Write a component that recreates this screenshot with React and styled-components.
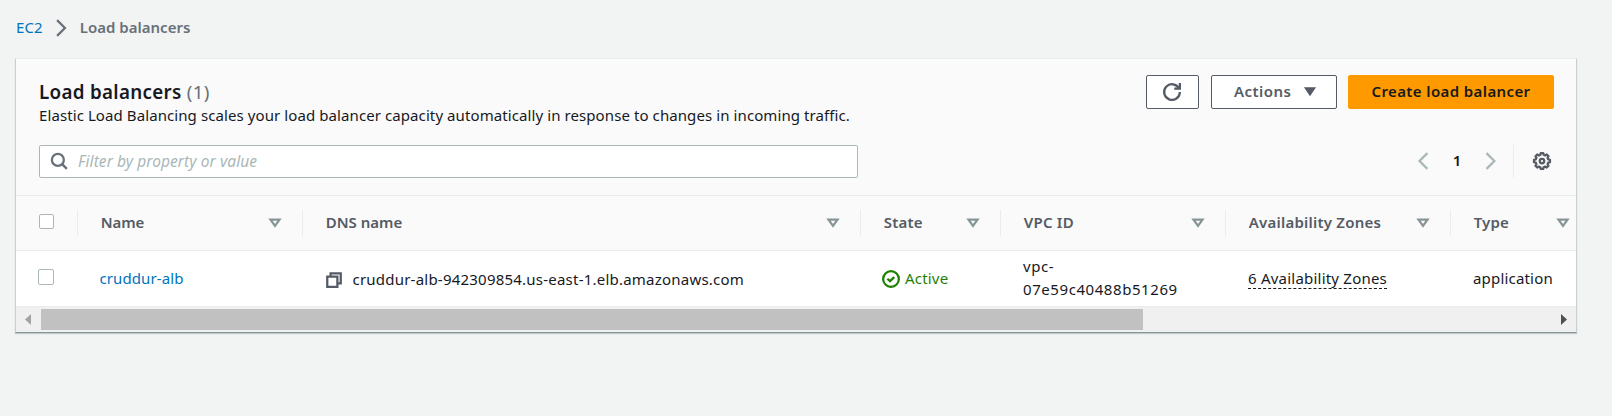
import React from 'react';
import styled, { createGlobalStyle, css } from 'styled-components';

const color = {
  page: '#f2f4f4',
  panel: '#fafafa',
  line: '#eaeded',
  edge: '#c9d0d2',
  border: '#aab7b8',
  text: '#16191f',
  heading: '#545b64',
  muted: '#687078',
  caret: '#879596',
  link: '#0073bb',
  success: '#1d8102',
  accent: '#ff9900',
};

const GlobalStyle = createGlobalStyle`
  *, *::before, *::after { box-sizing: border-box; }
  body {
    margin: 0;
    min-height: 100vh;
    background: ${color.page};
    color: ${color.text};
    font: 400 15px/22px "Noto Sans", "Open Sans", sans-serif;
  }
  button, input { font: inherit; }
`;

const Page = styled.main`
  padding: 16px 35px 0 15px;
`;

const Breadcrumbs = styled.nav`
  display: flex;
  align-items: flex-start;
  height: 42px;
  padding-left: 1px;
`;

const CrumbLink = styled.a`
  color: ${color.link};
  letter-spacing: 0.15px;
`;

const CrumbCurrent = styled.span`
  color: ${color.muted};
  font-weight: 600;
`;

const Svg = styled.svg`
  display: block;
  flex: none;
  width: 18px;
  height: 18px;
  fill: none;
  stroke: currentColor;
  stroke-width: 2;
  overflow: visible;
`;

const CrumbArrow = styled(Svg)`
  margin: 3px 10px 0 9px;
  color: ${color.muted};
`;

const Card = styled.section`
  width: 1562px;
  background: #fff;
  border: 1px solid ${color.edge};
  border-top-color: ${color.line};
  border-bottom-color: ${color.caret};
  box-shadow: 0 1px 1px rgba(0, 28, 36, 0.2);
`;

const CardHeader = styled.header`
  height: 137px;
  padding: 16px 22px 0 23px;
  background: ${color.panel};
  border-bottom: 1px solid ${color.line};
`;

const TitleRow = styled.div`
  display: flex;
  justify-content: space-between;
  height: 70px;
`;

const Title = styled.h2`
  margin: 5px 0 0;
  font-size: 18.8px;
  line-height: 24px;
  font-weight: 600;
  letter-spacing: 0.3px;
`;

const Count = styled.span`
  color: ${color.muted};
  font-weight: 400;
`;

const Description = styled.p`
  margin: 0;
  letter-spacing: 0.09px;
`;

const ButtonGroup = styled.div`
  display: flex;
  align-items: flex-start;
`;

const Button = styled.button`
  display: flex;
  align-items: center;
  justify-content: center;
  width: ${(p) => p.$width}px;
  height: 34px;
  margin-left: 12px;
  padding: 0 0 2px;
  border: 1px solid ${color.heading};
  border-radius: 2px;
  background: #fff;
  color: ${color.heading};
  font-weight: 600;
  letter-spacing: 0.45px;
  ${(p) =>
    p.$primary &&
    css`
      margin-left: 11px;
      border-color: ${color.accent};
      background: ${color.accent};
      color: ${color.text};
      letter-spacing: 0.39px;
    `}
`;

const ActionsButton = styled(Button)`
  justify-content: flex-start;
  padding-left: 22px;
`;

const ButtonCaret = styled(Svg)`
  margin: 2px 0 0 10px;
  fill: currentColor;
  stroke-width: 1.5;
`;

const RefreshIcon = styled(Svg)`
  margin: 1px 2px 0 0;
`;

const ToolRow = styled.div`
  display: flex;
  justify-content: space-between;
  height: 33px;
`;

const SearchBox = styled.label`
  display: flex;
  align-items: center;
  width: 819px;
  padding: 0 0 1px 10px;
  background: #fff;
  border: 1px solid ${color.border};
  border-radius: 2px;
  color: ${color.muted};
`;

const SearchInput = styled.input`
  flex: 1;
  height: 22px;
  margin-left: 10px;
  padding: 0 0 1px;
  border: 0;
  outline: 0;
  background: none;
  color: ${color.text};
  &::placeholder {
    color: ${color.border};
    opacity: 1;
    font-style: italic;
    font-size: 15.5px;
    letter-spacing: 0.08px;
  }
`;

const Pager = styled.div`
  display: flex;
  align-items: center;
  padding-right: 3px;
`;

const PagerArrow = styled(Svg)`
  margin-bottom: 1px;
  color: ${color.border};
`;

const PageNumber = styled.span`
  width: 49px;
  padding: 0 1px 3px 0;
  text-align: center;
  font-weight: 600;
`;

const Preferences = styled.div`
  display: flex;
  align-items: center;
  height: 33px;
  margin-left: 13px;
  padding: 0 0 1px 19px;
  border-left: 1px solid ${color.line};
  color: ${color.heading};
`;

const columns = css`
  display: grid;
  grid-template-columns: 62px 225px 558px 140px 225px 225px 140px;
  overflow: hidden;
`;

const HeadRow = styled.div`
  ${columns}
  height: 55px;
  background: ${color.panel};
  border-bottom: 1px solid ${color.line};
`;

const HeadCell = styled.div`
  display: flex;
  align-items: center;
  justify-content: space-between;
  height: 26px;
  margin-top: 14px;
  padding: 0 18px 0 22.7px;
  border-right: 1px solid ${color.line};
  color: ${color.heading};
`;

const HeadLabel = styled.span`
  padding-bottom: 2px;
  font-weight: 600;
  letter-spacing: ${(p) => p.$tracking}px;
`;

const SortCaret = styled(Svg)`
  color: ${color.caret};
`;

const BodyRow = styled.div`
  ${columns}
  height: 56px;
  padding-bottom: 1px;
  border-bottom: 1px solid ${color.line};
`;

const Cell = styled.div`
  display: flex;
  align-items: center;
  padding-left: ${(p) => p.$inset || 21}px;
  letter-spacing: ${(p) => p.$tracking || 0.1}px;
`;

const Checkbox = styled.span`
  width: ${(p) => p.$size}px;
  height: ${(p) => p.$size}px;
  border: 1px solid ${color.border};
  border-radius: 2px;
  background: #fff;
`;

const HeadCheck = styled(HeadCell)`
  padding-left: 23px;
  padding-bottom: 3px;
`;

const BodyCheck = styled(Cell)`
  padding-left: 22px;
  padding-bottom: 2px;
`;

const NameLink = styled.a`
  color: ${color.link};
`;

const DnsCell = styled(Cell)`
  gap: 9.5px;
  padding-top: 2px;
  letter-spacing: 0.22px;
`;

const DnsName = styled.span`
  padding-bottom: 1px;
`;

const CopyIcon = styled(Svg)`
  margin-top: 1px;
  color: ${color.heading};
`;

const Status = styled(Cell)`
  gap: 5px;
  color: ${color.success};
`;

const StatusIcon = styled(Svg)`
  margin-top: 2px;
`;

const VpcId = styled.div`
  line-height: 23px;
  letter-spacing: 0.57px;
`;

const ZonesText = styled.span`
  height: 22px;
  border-bottom: 1px dashed ${color.text};
`;

const Scrollbar = styled.div`
  display: flex;
  align-items: center;
  height: 25px;
  padding: 0 9px;
  background: #f0f0f0;
`;

const ScrollThumb = styled.div`
  width: 1102px;
  height: 21px;
  margin: 0 auto 0 10px;
  background: #c1c1c1;
`;

const ScrollArrow = styled.svg`
  display: block;
  width: 6px;
  height: 11px;
  fill: ${(p) => p.$fill};
`;

const gearPath = (() => {
  const points = [];
  for (let i = 0; i < 8; i += 1) {
    [[-15, 5.7], [-9, 7.2], [9, 7.2], [15, 5.7]].forEach(([offset, r]) => {
      const a = ((i * 45 + offset) * Math.PI) / 180;
      points.push(`${(8 + r * Math.cos(a)).toFixed(2)} ${(8 + r * Math.sin(a)).toFixed(2)}`);
    });
  }
  return `M${points.join('L')}Z`;
})();

const headings = [
  { label: 'Name', tracking: -0.1 },
  { label: 'DNS name', tracking: 0 },
  { label: 'State', tracking: 0.2 },
  { label: 'VPC ID', tracking: 0.25 },
  { label: 'Availability Zones', tracking: 0.23 },
  { label: 'Type', tracking: 0.15 },
];

export default function App() {
  return (
    <>
      <GlobalStyle />
      <Page>
        <Breadcrumbs>
          <CrumbLink>EC2</CrumbLink>
          <CrumbArrow viewBox="0 0 16 16">
            <path d="M4.5 1l7 7-7 7" />
          </CrumbArrow>
          <CrumbCurrent>Load balancers</CrumbCurrent>
        </Breadcrumbs>
        <Card>
          <CardHeader>
            <TitleRow>
              <div>
                <Title>
                  Load balancers <Count>(1)</Count>
                </Title>
                <Description>
                  Elastic Load Balancing scales your load balancer capacity automatically in response to changes in
                  incoming traffic.
                </Description>
              </div>
              <ButtonGroup>
                <Button $width={53} aria-label="Refresh">
                  <RefreshIcon viewBox="0 0 16 16">
                    <path d="M10 5h5V0" />
                    <path d="M15 8a7 7 0 1 1-.7-3" />
                  </RefreshIcon>
                </Button>
                <ActionsButton $width={126}>
                  Actions
                  <ButtonCaret viewBox="0 0 16 16">
                    <path d="M4 4.5h8l-4 6z" />
                  </ButtonCaret>
                </ActionsButton>
                <Button $width={206} $primary>
                  Create load balancer
                </Button>
              </ButtonGroup>
            </TitleRow>
            <ToolRow>
              <SearchBox>
                <Svg viewBox="0 0 16 16">
                  <circle cx="7" cy="7" r="5.3" />
                  <path d="M11 11l4 4" />
                </Svg>
                <SearchInput placeholder="Filter by property or value" />
              </SearchBox>
              <Pager>
                <PagerArrow viewBox="0 0 16 16">
                  <path d="M11 1L4 8l7 7" />
                </PagerArrow>
                <PageNumber>1</PageNumber>
                <PagerArrow viewBox="0 0 16 16">
                  <path d="M4 1l7 7-7 7" />
                </PagerArrow>
                <Preferences>
                  <Svg viewBox="0 0 16 16">
                    <path d={gearPath} strokeLinejoin="round" />
                    <circle cx="8" cy="8" r="2" />
                  </Svg>
                </Preferences>
              </Pager>
            </ToolRow>
          </CardHeader>
          <HeadRow>
            <HeadCheck>
              <Checkbox $size={15} />
            </HeadCheck>
            {headings.map(({ label, tracking }) => (
              <HeadCell key={label}>
                <HeadLabel $tracking={tracking}>{label}</HeadLabel>
                <SortCaret viewBox="0 0 16 16">
                  <path d="M4 5h8l-4 5.5z" />
                </SortCaret>
              </HeadCell>
            ))}
          </HeadRow>
          <BodyRow>
            <BodyCheck>
              <Checkbox $size={16} />
            </BodyCheck>
            <Cell $inset={21.5}>
              <NameLink>cruddur-alb</NameLink>
            </Cell>
            <DnsCell $inset={22}>
              <CopyIcon viewBox="0 0 16 16">
                <path d="M2 5h9v9H2z" />
                <path d="M5 5V2h9v9h-3" />
              </CopyIcon>
              <DnsName>cruddur-alb-942309854.us-east-1.elb.amazonaws.com</DnsName>
            </DnsCell>
            <Status $tracking={0.2}>
              <StatusIcon viewBox="0 0 16 16">
                <circle cx="8" cy="8" r="7" />
                <path d="M4.8 7.8l2.3 2.1 3.8-3.6" />
              </StatusIcon>
              Active
            </Status>
            <Cell $inset={22}>
              <VpcId>
                vpc-
                <br />
                07e59c40488b51269
              </VpcId>
            </Cell>
            <Cell $inset={22} $tracking={0.22}>
              <ZonesText>6 Availability Zones</ZonesText>
            </Cell>
            <Cell $inset={22} $tracking={0.18}>
              application
            </Cell>
          </BodyRow>
          <Scrollbar>
            <ScrollArrow viewBox="0 0 6 11" $fill="#a3a3a3">
              <path d="M6 0v11L0 5.5z" />
            </ScrollArrow>
            <ScrollThumb />
            <ScrollArrow viewBox="0 0 6 11" $fill="#505050">
              <path d="M0 0v11l6-5.5z" />
            </ScrollArrow>
          </Scrollbar>
        </Card>
      </Page>
    </>
  );
}
